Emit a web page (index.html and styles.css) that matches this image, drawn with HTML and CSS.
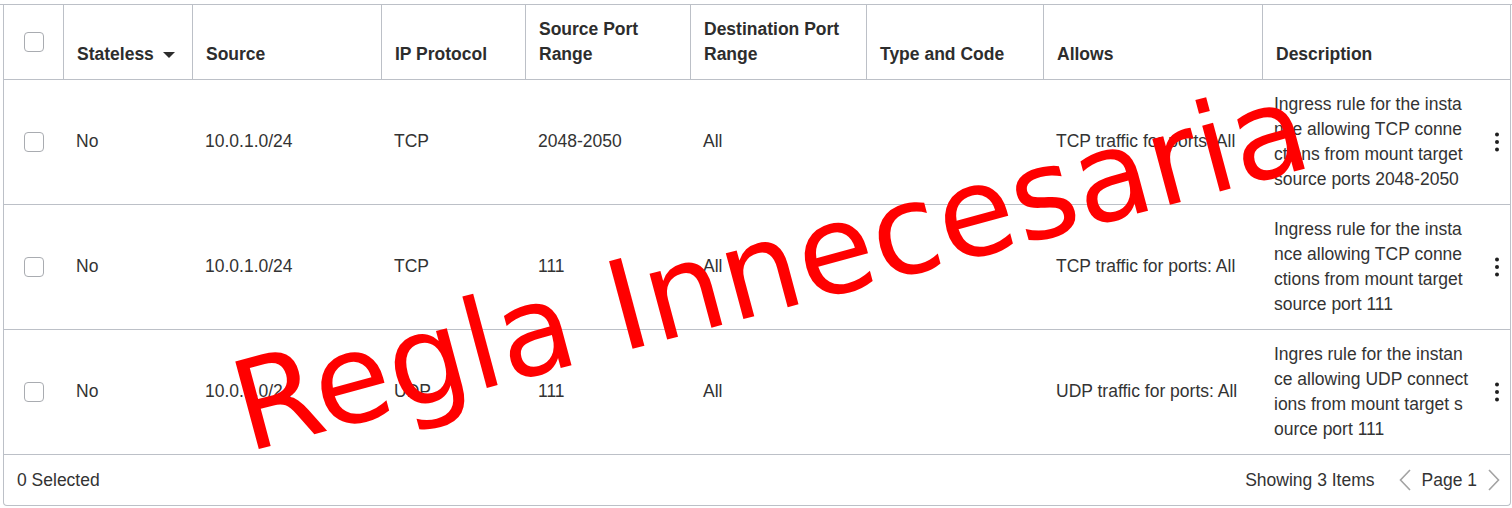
FILE: index.html
```html
<!DOCTYPE html>
<html lang="es">
<head>
<meta charset="utf-8">
<title>Security rules</title>
<link rel="stylesheet" href="styles.css">
</head>
<body>
<div class="frame">
  <div class="card">
    <div class="thead">
      <div class="th th-check"><span class="cb"></span></div>
      <div class="th"><span>Stateless</span><span class="caret"></span></div>
      <div class="th">Source</div>
      <div class="th">IP Protocol</div>
      <div class="th">Source Port Range</div>
      <div class="th">Destination Port Range</div>
      <div class="th">Type and Code</div>
      <div class="th">Allows</div>
      <div class="th th-last">Description</div>
    </div>

    <div class="row">
      <div class="td td-check"><span class="cb"></span></div>
      <div class="td">No</div>
      <div class="td">10.0.1.0/24</div>
      <div class="td">TCP</div>
      <div class="td">2048-2050</div>
      <div class="td">All</div>
      <div class="td"></div>
      <div class="td">TCP traffic for ports: All</div>
      <div class="td td-desc"><div>Ingress rule for the instance allowing TCP connections from mount target source ports 2048-2050</div></div>
      <div class="td td-act"><svg class="kebab" width="4" height="20" viewBox="0 0 4 20"><circle cx="2" cy="2.5" r="2"/><circle cx="2" cy="10" r="2"/><circle cx="2" cy="17.5" r="2"/></svg></div>
    </div>

    <div class="row">
      <div class="td td-check"><span class="cb"></span></div>
      <div class="td">No</div>
      <div class="td">10.0.1.0/24</div>
      <div class="td">TCP</div>
      <div class="td">111</div>
      <div class="td">All</div>
      <div class="td"></div>
      <div class="td">TCP traffic for ports: All</div>
      <div class="td td-desc"><div>Ingress rule for the instance allowing TCP connections from mount target source port 111</div></div>
      <div class="td td-act"><svg class="kebab" width="4" height="20" viewBox="0 0 4 20"><circle cx="2" cy="2.5" r="2"/><circle cx="2" cy="10" r="2"/><circle cx="2" cy="17.5" r="2"/></svg></div>
    </div>

    <div class="row">
      <div class="td td-check"><span class="cb"></span></div>
      <div class="td">No</div>
      <div class="td">10.0.1.0/24</div>
      <div class="td">UDP</div>
      <div class="td">111</div>
      <div class="td">All</div>
      <div class="td"></div>
      <div class="td">UDP traffic for ports: All</div>
      <div class="td td-desc"><div>Ingres rule for the instance allowing UDP connections from mount target source port 111</div></div>
      <div class="td td-act"><svg class="kebab" width="4" height="20" viewBox="0 0 4 20"><circle cx="2" cy="2.5" r="2"/><circle cx="2" cy="10" r="2"/><circle cx="2" cy="17.5" r="2"/></svg></div>
    </div>

    <div class="foot">
      <span>0 Selected</span>
      <div class="pager">
        <span class="count">Showing 3 Items</span>
        <svg class="chev" width="12" height="22" viewBox="0 0 12 22"><polyline points="11,1 1.5,11 11,21"/></svg>
        <span>Page 1</span>
        <svg class="chev" width="12" height="22" viewBox="0 0 12 22"><polyline points="1,1 10.5,11 1,21"/></svg>
      </div>
    </div>
  </div>
</div>
<div class="watermark">Regla Innecesaria</div>
</body>
</html>
```

FILE: styles.css
```css
html, body {
  margin: 0;
  padding: 0;
  background: #ffffff;
}

body {
  position: relative;
  width: 1512px;
  height: 508px;
  overflow: hidden;
  font-family: "Liberation Sans", Arial, sans-serif;
  font-size: 17.5px;
  color: #333333;
}

.frame {
  margin-top: 4px;
  border-top: 1px solid #bcc0c7;
}

.card {
  margin-left: 3px;
  width: 1508px;
  box-sizing: border-box;
  border: 1px solid #bcc0c7;
  border-top: none;
  border-radius: 0 0 4px 4px;
}

.thead {
  display: grid;
  grid-template-columns: 60px 129px 189px 144px 165px 176px 177px 219px 1fr;
  height: 75px;
  box-sizing: border-box;
  border-bottom: 1px solid #bcc0c7;
}

.th {
  display: flex;
  align-items: flex-end;
  box-sizing: border-box;
  padding: 0 10px 12px 13px;
  border-right: 1px solid #bcc0c7;
  font-weight: bold;
  line-height: 25px;
  color: #2d2d2d;
}

.th-last {
  border-right: none;
}

.th-check {
  align-items: center;
  justify-content: center;
  padding: 0;
}

.caret {
  width: 0;
  height: 0;
  margin: 0 0 9px 9px;
  border-left: 6px solid transparent;
  border-right: 6px solid transparent;
  border-top: 6px solid #2d2d2d;
}

.cb {
  display: block;
  width: 20px;
  height: 20px;
  box-sizing: border-box;
  border: 1px solid #a9acb1;
  border-radius: 4px;
  background: #ffffff;
}

.row {
  display: grid;
  grid-template-columns: 60px 129px 189px 144px 165px 176px 177px 219px 208px 1fr;
  height: 125px;
  box-sizing: border-box;
  border-bottom: 1px solid #bcc0c7;
}

.td {
  display: flex;
  align-items: center;
  box-sizing: border-box;
  padding-left: 12px;
  padding-bottom: 1px;
  line-height: 25px;
  white-space: nowrap;
}

.td-check {
  justify-content: center;
  padding-left: 0;
  padding-bottom: 0;
}

.td-desc {
  padding-left: 11px;
  white-space: normal;
  word-break: break-all;
}

.td-desc > div {
  width: 196px;
}

.td-act {
  justify-content: flex-end;
  padding-right: 11px;
}

.kebab {
  fill: #1f1f1f;
}

.foot {
  display: flex;
  align-items: center;
  justify-content: space-between;
  height: 50px;
  padding: 0 10px 0 13px;
}

.pager {
  display: flex;
  align-items: center;
  gap: 11px;
}

.count {
  margin-right: 13px;
}

.chev {
  fill: none;
  stroke: #a3a3a3;
  stroke-width: 1.6;
}

.watermark {
  position: absolute;
  left: 770px;
  top: 267px;
  transform: translate(-50%, -50%) rotate(-15deg);
  font-family: "DejaVu Sans", sans-serif;
  font-size: 124.5px;
  line-height: normal;
  color: #ff0000;
  white-space: nowrap;
}
```
